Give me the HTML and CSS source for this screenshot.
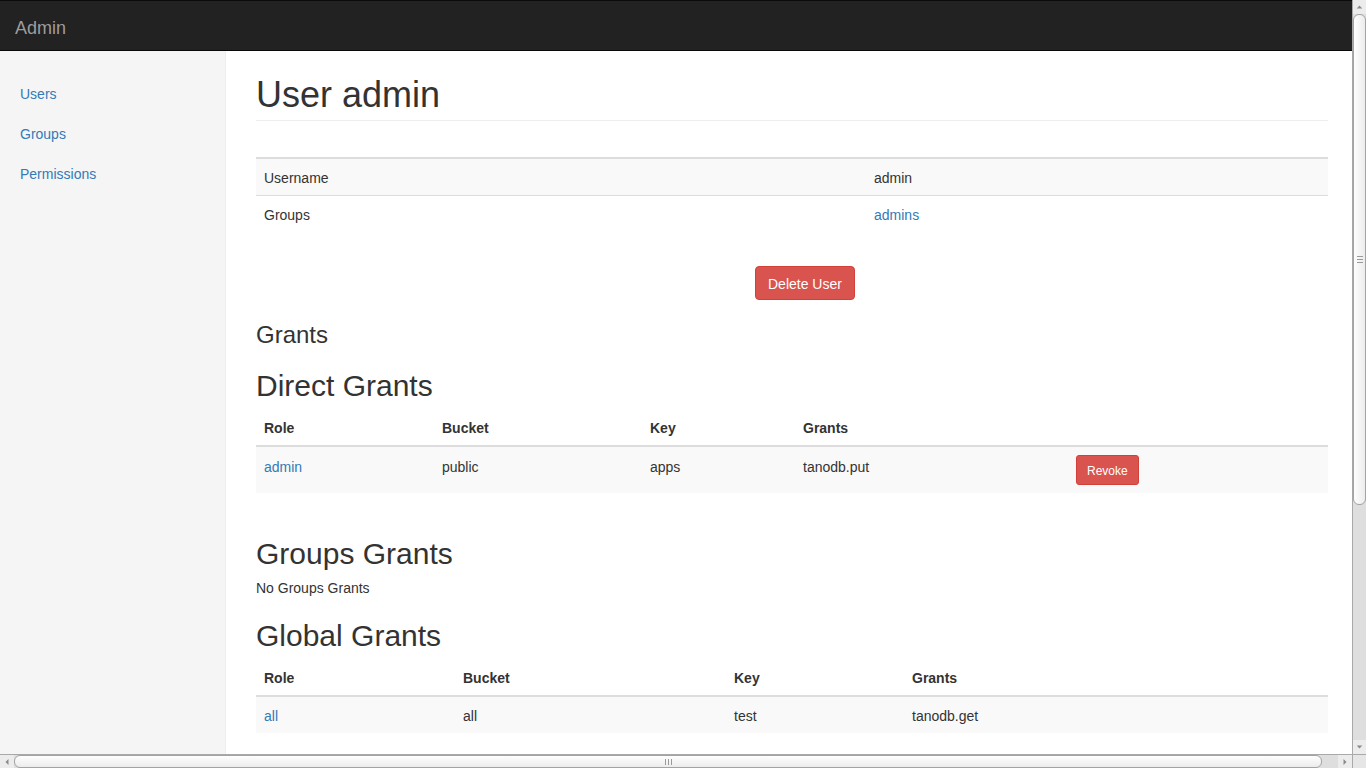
FILE: index.html
```html
<!DOCTYPE html>
<html lang="en">
<head>
<meta charset="utf-8">
<title>Admin</title>
<link rel="stylesheet" href="styles.css">
</head>
<body>
<div class="frame">
  <div class="viewport">
    <nav class="navbar"><a class="brand" href="#">Admin</a></nav>
    <div class="layout">
      <aside class="sidebar">
        <ul class="nav">
          <li><a href="#">Users</a></li>
          <li><a href="#">Groups</a></li>
          <li><a href="#">Permissions</a></li>
        </ul>
      </aside>
      <main class="main">
        <h1 class="page-header">User admin</h1>
        <table class="table info-table">
          <colgroup><col class="c-info1"><col></colgroup>
          <tbody>
            <tr><td>Username</td><td>admin</td></tr>
            <tr><td>Groups</td><td><a href="#">admins</a></td></tr>
          </tbody>
        </table>
        <div class="actions"><button class="btn btn-danger">Delete User</button></div>
        <h3 class="grants-title">Grants</h3>
        <h2 class="section-title first">Direct Grants</h2>
        <table class="table">
          <colgroup><col class="d1"><col class="d2"><col class="d3"><col class="d4"><col class="d5"></colgroup>
          <thead><tr><th>Role</th><th>Bucket</th><th>Key</th><th>Grants</th><th></th></tr></thead>
          <tbody>
            <tr class="tall"><td><a href="#">admin</a></td><td>public</td><td>apps</td><td>tanodb.put</td><td class="btn-cell"><button class="btn btn-danger btn-sm">Revoke</button></td></tr>
          </tbody>
        </table>
        <h2 class="section-title groups">Groups Grants</h2>
        <p class="empty">No Groups Grants</p>
        <h2 class="section-title global">Global Grants</h2>
        <table class="table">
          <colgroup><col class="g1"><col class="g2"><col class="g3"><col class="g4"></colgroup>
          <thead><tr><th>Role</th><th>Bucket</th><th>Key</th><th>Grants</th></tr></thead>
          <tbody>
            <tr><td><a href="#">all</a></td><td>all</td><td>test</td><td>tanodb.get</td></tr>
          </tbody>
        </table>
      </main>
    </div>
  </div>
  <div class="vscroll">
    <div class="sb-btn">
      <svg width="14" height="14" viewBox="0 0 14 14"><path d="M4 8.5 L7 5.5 L10 8.5 Z" fill="#8a8a8a"/></svg>
    </div>
    <div class="thumb thumb-v">
      <svg width="6" height="7" viewBox="0 0 6 7"><path d="M0 0.5H6M0 3.5H6M0 6.5H6" stroke="#9a9a9a" stroke-width="1"/></svg>
    </div>
    <div class="track"></div>
    <div class="sb-btn">
      <svg width="14" height="14" viewBox="0 0 14 14"><path d="M4 5.5 L7 8.5 L10 5.5 Z" fill="#8a8a8a"/></svg>
    </div>
  </div>
  <div class="hscroll">
    <div class="sb-btn">
      <svg width="14" height="14" viewBox="0 0 14 14"><path d="M8.5 4 L5.5 7 L8.5 10 Z" fill="#8a8a8a"/></svg>
    </div>
    <div class="thumb thumb-h">
      <svg width="7" height="6" viewBox="0 0 7 6"><path d="M0.5 0V6M3.5 0V6M6.5 0V6" stroke="#9a9a9a" stroke-width="1"/></svg>
    </div>
    <div class="track"></div>
    <div class="sb-btn">
      <svg width="14" height="14" viewBox="0 0 14 14"><path d="M5.5 4 L8.5 7 L5.5 10 Z" fill="#8a8a8a"/></svg>
    </div>
  </div>
  <div class="corner"></div>
</div>
</body>
</html>
```

FILE: styles.css
```css
* { box-sizing: border-box; }

html, body {
  margin: 0;
  padding: 0;
  overflow: hidden;
}

body {
  font-family: "Liberation Sans", Arial, Helvetica, sans-serif;
  font-size: 14px;
  line-height: 20px;
  color: #333;
  background: #fff;
}

a { color: #337ab7; text-decoration: none; }

.frame {
  display: grid;
  grid-template-columns: 1352px 14px;
  grid-template-rows: 754px 14px;
  width: 1366px;
  height: 768px;
}

.viewport {
  overflow: hidden;
  display: flex;
  flex-direction: column;
  min-height: 0;
}

/* navbar */
.navbar {
  height: 51px;
  flex: none;
  background: #222;
  border-top: 1px solid #0b0b0b;
  border-bottom: 1px solid #080808;
}

.brand {
  display: block;
  width: max-content;
  padding: 17px 15px 0;
  font-size: 18px;
  line-height: 20px;
  color: #9d9d9d;
}

.layout {
  flex: 1;
  display: flex;
  min-height: 0;
}

/* sidebar */
.sidebar {
  width: 226px;
  flex: none;
  background: #f5f5f5;
  border-right: 1px solid #eee;
  padding-top: 23px;
}

.nav {
  list-style: none;
  margin: 0;
  padding: 0;
}

.nav a {
  display: block;
  padding: 10px 20px;
  line-height: 20px;
}

/* main */
.main {
  flex: 1;
  min-width: 0;
  padding: 24px 24px 0 30px;
}

h1, h2, h3 {
  font-weight: 500;
  color: #333;
  margin: 0;
}

.page-header {
  font-size: 36px;
  line-height: 39.6px;
  padding-bottom: 5px;
  border-bottom: 1px solid #eee;
}

.table {
  width: 100%;
  border-collapse: collapse;
  table-layout: fixed;
}

.table th,
.table td {
  padding: 9px 8px 7px;
  line-height: 20px;
  text-align: left;
  vertical-align: top;
}

.table th {
  font-weight: bold;
  vertical-align: bottom;
  border-bottom: 2px solid #ddd;
}

.table tr.tall td { padding-top: 10px; padding-bottom: 6px; }
.table tr.tall td.btn-cell { padding-top: 8px; padding-bottom: 8px; }

.table tbody tr:nth-child(odd) td { background: #f9f9f9; }
.table tbody tr + tr td { border-top: 1px solid #ddd; }

.info-table {
  margin-top: 36px;
  border-top: 2px solid #ddd;
}

.c-info1 { width: 610px; }
.d1 { width: 178px; }
.d2 { width: 208px; }
.d3 { width: 153px; }
.d4 { width: 273px; }
.d5 { width: 260px; }
.g1 { width: 199px; }
.g2 { width: 271px; }
.g3 { width: 178px; }
.g4 { width: 424px; }

.actions {
  display: flex;
  margin-top: 34px;
  padding-left: 499px;
}

.btn {
  font-family: inherit;
  font-size: 14px;
  line-height: 20px;
  padding: 7px 12px 5px;
  border: 1px solid transparent;
  border-radius: 4px;
  cursor: pointer;
}

.btn-danger {
  color: #fff;
  background: #d9534f;
  border-color: #d43f3a;
}

.btn-sm {
  font-size: 12px;
  line-height: 18px;
  padding: 6px 10px 4px;
  border-radius: 3px;
}

.grants-title {
  font-size: 24px;
  line-height: 26.4px;
  margin-top: 22px;
}

.section-title {
  font-size: 30px;
  line-height: 33px;
  margin-bottom: 7px;
}

.section-title.first { margin-top: 21px; }
.section-title.groups { margin-top: 44px; }
.section-title.global { margin-top: 21px; }

.empty { margin: 0; padding-top: 1px; }

/* scrollbars */
.vscroll {
  display: flex;
  flex-direction: column;
  background: #dedede;
  border-left: 1px solid #a9a9a9;
}

.hscroll {
  display: flex;
  background: #dedede;
  border-top: 1px solid #a9a9a9;
}

.corner {
  background: #e6e6e6;
  border-top: 1px solid #a9a9a9;
  border-left: 1px solid #a9a9a9;
}

.sb-btn {
  flex: none;
  display: flex;
  align-items: center;
  justify-content: center;
  background: #ececec;
}

.vscroll .sb-btn { width: 13px; height: 14px; }
.hscroll .sb-btn { width: 14px; height: 13px; }

.track { flex: 1; }

.thumb {
  flex: none;
  display: flex;
  align-items: center;
  justify-content: center;
  border: 1px solid #a3a3a3;
  border-radius: 6px;
}

.thumb-v {
  height: 491px;
  background: linear-gradient(to right, #fefefe, #ececec);
}

.thumb-h {
  width: 1308px;
  background: linear-gradient(to bottom, #fefefe, #ececec);
}
```
